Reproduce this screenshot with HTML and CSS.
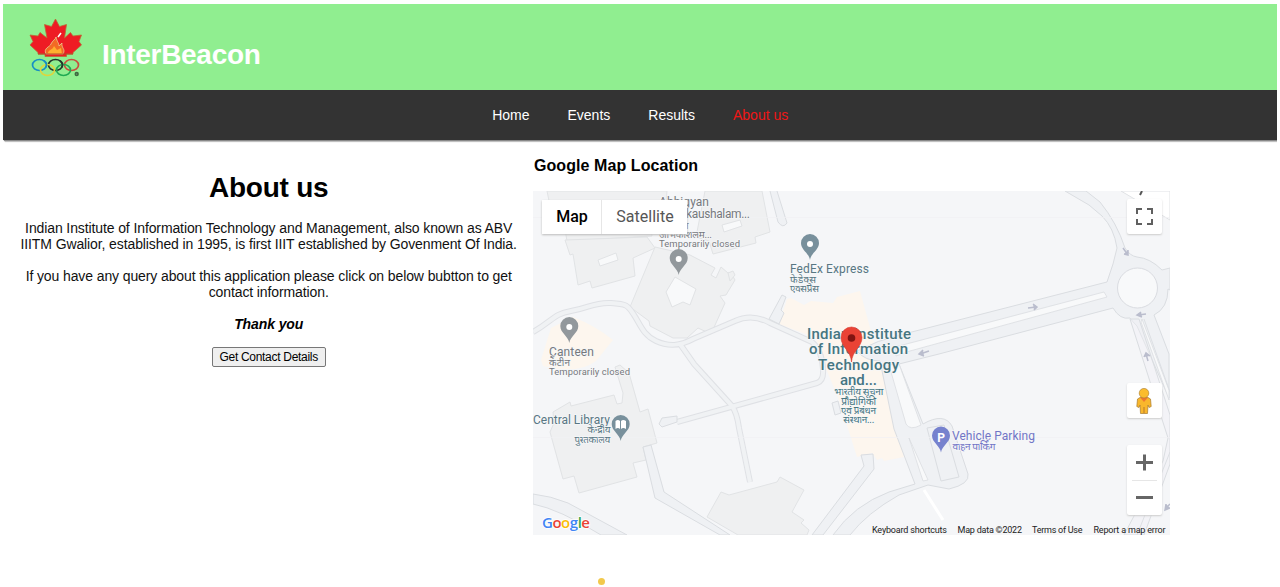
FILE: index.html
```html
<!DOCTYPE html>
<html lang="en">
<head>
<meta charset="utf-8">
<title>InterBeacon - About us</title>
<link rel="stylesheet" href="styles.css">
</head>
<body>
<header class="banner">
  <svg class="logo" width="54" height="60" viewBox="29 18 54 60" aria-hidden="true">
    <path d="M55.500 19 59.500 26.500 66.500 24.500 64.500 38 70.500 32.500 73 36 81.500 35 79 41.500 81.500 45 73 52.500V54H66.500V56.500H45V54H38V52.500L30 45 33 41.500 30 35 38 36 40 32.500 47 38 44.500 24.500 51.500 26.500Z" fill="#ee1c24" stroke="#b96b35" stroke-width=".8"/>
    <path d="M46 54C43 48 50 47 51 44 52 41 56 39 56 37 57 42 59 43 59 46L62 43C61 48 66 49 63 54Z" fill="#f36a24" stroke="#e9cf91" stroke-width=".8"/>
    <path d="M48 54C47 50 53 50 54 46L57 50 61 48 62 54Z" fill="#ffb02e"/>
    <path d="M58 37 61 33" stroke="#fff" stroke-width="1.500"/>
    <path d="M38 54H73" stroke="#b64a24" stroke-width="1"/>
    <g fill="none" stroke-width="1.700">
      <ellipse cx="39.500" cy="65" rx="7" ry="5.500" stroke="#168fc4"/>
      <ellipse cx="55.500" cy="65" rx="7" ry="5.500" stroke="#25352c"/>
      <ellipse cx="71.500" cy="65" rx="7" ry="5.500" stroke="#c94b3d"/>
      <ellipse cx="47.500" cy="70" rx="7" ry="5.500" stroke="#dfd43c"/>
      <ellipse cx="63.500" cy="70" rx="7" ry="5.500" stroke="#20a952"/>
      <path d="M44 60.800A7 5.500 0 0 1 45.500 67.800" stroke="#168fc4"/>
      <path d="M60 60.800A7 5.500 0 0 1 61.500 67.800" stroke="#25352c"/>
    </g>
    <circle cx="76.700" cy="74" r="2.200" fill="#3d6940"/><circle cx="76.700" cy="74" r=".5" fill="#8acb8a"/>
  </svg>
  <h1 class="brand">InterBeacon</h1>
</header>
<nav class="menu">
  <a class="link">Home</a><a class="link">Events</a><a class="link">Results</a><a class="link active">About us</a>
</nav>
<main class="content">
  <section class="about">
    <h2 class="title">About us</h2>
    <p class="intro">Indian Institute of Information Technology and Management, also known as ABV<br>IIITM Gwalior, established in 1995, is first IIIT established by Govenment Of India.</p>
    <p class="query">If you have any query about this application please click on below bubtton to get<br>contact information.</p>
    <p class="thanks">Thank you</p>
    <button class="contact">Get Contact Details</button>
  </section>
  <section class="location">
    <h3 class="map-title">Google Map Location</h3>
    <div class="map">
      <svg class="canvas" width="637" height="344" viewBox="533 191 637 344">
        <rect x="533" y="191" width="637" height="344" fill="#f5f6f8"/>
        <g class="building">
          <path d="M547 191H667L665 214 650 224 652 236 567 241 564 224 553 220Z"/>
          <path d="M705 191H762L770 232 755 237 756 243 713 254 709 241 696 237Z"/>
          <path d="M565 240 570 255 573 254 578 285 590 281 592 288 635 276 633 258 655 248 647 237Z"/>
          <path d="M655 247 690 255 715 268 711 275 716 278 721 267 728 273 731 273 735 280 726 295 720 296 725 303 711 334 698 328 687 338 673 338 650 326 649 321 630 307Z"/>
          <path d="M728 273 733 271 735 275 730 281Z"/>
          <path d="M620 365 615 367 623 393 622 403 617 404 614 395 571 406 570 402 553 412 554 423 550 432 563 479 574 476 579 493 637 477 633 463 646 460 643 447 657 443 648 409 640 412 629 373Z"/>
          <path d="M707 517 721 492 729 495 777 482 780 477 804 490 792 512 804 520 801 523 809 530 807 535H738Z"/>
        </g>
        <path class="hole" d="M598 260 616 253 618 260 600 266ZM675 277 696 289 690 305 683 302 672 307 666 292ZM722 225 740 220 742 226 724 232Z"/>
        <g fill="#fdf6ee">
          <path d="M551 328 573 317Q596 326 613 340L596 361Q577 375 543 366L541 360Z"/>
          <path d="M787 299 791 298 804 305 811 301 833 303 837 297 860 291 872 335 904 457 884 461 882 458 877 460 872 453 857 457 839 400 822 359 816 338 779 324Z"/>
        </g>
        <g class="road-line">
          <path d="M533 332C553 321 553 314 571 311S594 302 611 303 628 306 634 315 643 335 656 341 680 346 693 339L735 321Q752 313 770 323L812 342Q822 350 823 369 824 381 817 383L677 422"/>
          <path d="M680 344 694 364 732 406Q737 413 739 428L750 482"/>
        </g>
        <g class="road-fill">
          <path d="M533 332C553 321 553 314 571 311S594 302 611 303 628 306 634 315 643 335 656 341 680 346 693 339L735 321Q752 313 770 323L812 342Q822 350 823 369 824 381 817 383L677 422"/>
          <path d="M680 344 694 364 732 406Q737 413 739 428L750 482"/>
        </g>
        <path class="road-area" d="M659 424 662 418 677 416V422L662 427ZM769 319 782 295 786 297 781 310 784 313 779 324ZM832 403 838 401 841 413 835 415Z"/>
        <path d="M770 191 778 222Q783 229 787 223L777 191" class="road-area"/>
        <path d="M533 494Q551 496 568 503L627 535H601Q559 509 533 504Z" class="road-area"/>
        <path d="M643 447 651 445 664 492 730 535H720L655 498Z" class="road-area"/>
        <path d="M861 455 873 454 874 469 823 535H812L864 466Z" class="road-area"/>
        <path class="road-area" d="M857 351Q878 340 900 335L1107 282 1113 264 1117 248Q1114 228 1102 216L1089 205 1065 191H1086L1100 202Q1117 223 1125 248 1130 256 1137 257 1150 258 1162 270L1170 268V290L1168 289Q1168 308 1154 315L1169 354V398L1137 326Q1132 321 1130 318 1120 320 1113 308L939 354 899 364 923 424Q944 412 952 426L968 474Q970 484 949 489L928 485 899 495Q867 513 850 535H833Q854 505 889 492L915 484 894 429 880 361Q865 361 857 351Z"/>
        <path class="median" d="M895 347 1104 292 1107 297 910 351 896 356ZM899 364 921 425Q910 431 906 424L889 365ZM909 438 928 480 923 481ZM1142 319 1169 390V400Q1152 352 1141 322Z"/>
        <path class="road-area" d="M927 428 944 425 959 477 941 481Z"/>
        <circle cx="1137.500" cy="288" r="20" fill="#f8f9fa" stroke="#dadce1"/>
        <path class="road-area" d="M1139 319 1170 415V464L1144 535H1124L1163 461 1168 438 1130 319Z" fill-opacity=".4"/>
        <path d="M1144 319 1170 392M1170 452 1137 535" fill="none" stroke="#dcdfe3"/>
        <path d="M924 490 943 520" stroke="#fff" stroke-width="3"/>
        <path d="M1121 191 1170 220V191Z" fill="#fff" stroke="#e0e2e5"/>
        <path d="M1140 195 1142 191" stroke="#555" stroke-width="2"/>
        <path d="M533 217.500H1170M533 437.500H1170" stroke="#f0f1f3" stroke-width=".7"/>
        <g fill="#babdcd" stroke="#babdcd" stroke-width="1.500">
          <path d="M1028 308 1036 307M1033 304 1037 307 1034 310"/><path d="M1123 248 1128 255M1128 250V255L1124 254"/><path d="M1146 314 1138 315M1141 312 1137 315 1142 317"/><path d="M1148 361 1146 354M1144 357 1146 353 1150 356"/><path d="M929 351 920 354M923 350 919 354 924 356"/><path d="M1170 504 1165 509M1166 504 1165 510 1170 508"/>
        </g>
        <g class="labels gray">
          <text x="659" y="206" textLength="50">Abhigyan</text>
          <text x="686" y="218" textLength="64">kaushalam...</text>
          <text class="hi" x="683" y="229">न</text>
          <text class="hi" x="659" y="238" textLength="53">अभिकौशलम...</text>
          <text class="small" x="659" y="247" textLength="81">Temporarily closed</text>
          <text x="549" y="356" textLength="45">Canteen</text>
          <text class="hi" x="549" y="366" textLength="21">कैंटीन</text>
          <text class="small" x="549" y="375" textLength="81">Temporarily closed</text>
        </g>
        <g class="labels teal">
          <text x="790" y="273" textLength="79">FedEx Express</text>
          <text class="hi" x="790" y="283" textLength="26">फेडेक्स</text><text class="hi" x="790" y="292" textLength="29">एक्सप्रेस</text>
          <text x="533" y="424" textLength="77">Central Library</text>
          <text class="hi" x="587" y="433" textLength="23">केन्द्रीय</text><text class="hi" x="574" y="443" textLength="36">पुस्तकालय</text>
        </g>
        <g class="labels place">
          <text x="807" y="338.500" textLength="104">Indian Institute</text><text x="809" y="354" textLength="99">of Information</text><text x="818" y="369.500" textLength="81">Technology</text><text x="840" y="385" textLength="37">and...</text>
          <text class="hi" x="834" y="395" textLength="49">भारतीय सूचना</text><text class="hi" x="841" y="405" textLength="35">प्रौद्योगिकी</text><text class="hi" x="841" y="414" textLength="35">एवं प्रबंधन</text><text class="hi" x="843" y="423" textLength="31">संस्थान...</text>
        </g>
        <g class="labels violet"><text x="952" y="440" textLength="83">Vehicle Parking</text><text class="hi" x="952" y="450" textLength="43">वाहन पार्किंग</text></g>
        <defs><path id="pin" d="M0 0C-1-7-9-10-9-17A9 9 0 0 1 9-17C9-10 1-7 0 0Z"/></defs>
        <g fill="#92989c"><use href="#pin" x="678.700" y="275"/><use href="#pin" x="569.300" y="343"/></g>
        <g fill="#78909c"><use href="#pin" x="810" y="260"/><use href="#pin" x="620.700" y="441"/></g>
        <use href="#pin" x="941" y="452.500" fill="#7682ce"/>
        <g fill="#fff"><circle cx="678.700" cy="259" r="3"/><circle cx="569.300" cy="327" r="3"/><circle cx="810" cy="244" r="3"/><path d="M615.500 421Q618 419 620 421V429Q618 427 615.500 429ZM621 421Q623 419 626 421V429Q623 427 621 429Z"/></g>
        <text x="937.300" y="441.500" class="parking">P</text>
        <path d="M851.500 362C851 351 841 347 841 337.500A10.500 10.500 0 0 1 862 337.500C862 347 852 351 851.500 362Z" fill="#ea4335" stroke="#d53b30" stroke-width=".6"/><circle cx="851.500" cy="338" r="3.800" fill="#811411"/>
        <text x="542" y="528" class="google" textLength="48"><tspan fill="#4285f4">G</tspan><tspan fill="#ea4335">o</tspan><tspan fill="#fbbc05">o</tspan><tspan fill="#4285f4">g</tspan><tspan fill="#34a853">l</tspan><tspan fill="#ea4335">e</tspan></text>
        <g class="credits"><text x="872" y="532.500" textLength="75">Keyboard shortcuts</text><text x="957.500" y="532.500" textLength="64.500">Map data ©2022</text><text x="1032" y="532.500" textLength="50.500">Terms of Use</text><text x="1093.500" y="532.500" textLength="72">Report a map error</text></g>
      </svg>
      <div class="types"><span class="type chosen">Map</span><span class="type">Satellite</span></div>
      <div class="control fullscreen"><svg width="17" height="17"><path d="M1 6V1H6M11 1H16V6M16 11V16H11M6 16H1V11" fill="none" stroke="#606060" stroke-width="2"/></svg></div>
      <div class="control person"><svg width="16" height="26" viewBox="0 0 16 26"><path d="M4 9.500 1.500 11 .8 18.500 3 19.500 4 17 4.500 25.500H11.500L12 17 13 19.500 15.200 18.500 14.500 11 12 9.500Z" fill="#f9b72c" stroke="#a77b31" stroke-width=".7"/><path d="M4 9.500H12L8 14Z" fill="#ef7830"/><circle cx="8" cy="5.200" r="4.800" fill="#fbbc2d" stroke="#a77b31" stroke-width=".6"/><path d="M8 19V25" stroke="#b77a2d"/></svg></div>
      <div class="zoom"><svg width="35" height="70"><path d="M9 17.500H26M17.500 9.500V25.500M9 52.500H26" stroke="#666" stroke-width="3"/><path d="M5 35.500H30" stroke="#e6e6e6"/></svg></div>
    </div>
  </section>
</main>
<i class="dot"></i>
</body>
</html>
```
FILE: styles.css
```css
* { box-sizing: border-box; }
body { margin: 4px 3px 0 3.4px; background: #fff; color: #000; font-family: "Liberation Sans", Arial, sans-serif; height: 583px; overflow: hidden; }
.banner { display: flex; height: 86px; padding: 14px 0 0 25.6px; background: #90ee90; }
.logo { flex: none; }
.brand { margin: 21px 0 0 19px; color: #fff; font-size: 28px; line-height: 32px; letter-spacing: -.3px; }
.menu { display: flex; justify-content: center; gap: 38px; height: 50px; background: #333; box-shadow: 1px 1px 1px #888, 2px 2px 1px #ccc; line-height: 50px; font-size: 14px; color: #fff; }
.active { color: #f01616; }
.content { display: flex; }
.about { width: 529.6px; padding-left: 1px; text-align: center; font-size: 14px; line-height: 16px; letter-spacing: -.11px; color: #111; }
.title { margin: 32px 0 16px; font-size: 28px; line-height: 32px; letter-spacing: -.25px; color: #000; }
.about p { margin: 0 0 16px; white-space: nowrap; }
.about .thanks { margin-bottom: 15px; color: #000; font-weight: bold; font-style: italic; }
.contact { display: block; width: 114px; height: 20px; margin: 0 auto; padding: 0; border: 1px solid #777; border-radius: 2px; background: #efefef; font: 12px "Liberation Sans", Arial, sans-serif; letter-spacing: -.3px; letter-spacing: -.3px; }
.map-title { margin: 16px 0 15px 1px; font-size: 16px; line-height: 20px; letter-spacing: .08px; }
.map { position: relative; width: 637px; height: 344px; }
.canvas { display: block; }
.building { fill: #eff0f1; stroke: #e1e3e5; stroke-width: 1; }
.hole { fill: #f8f9fa; stroke: #e1e3e5; }
.road-line { fill: none; stroke: #dfe1e5; stroke-width: 6; }
.road-fill { fill: none; stroke: #f0f2f4; stroke-width: 4; }
.road-area { fill: #eff1f4; stroke: #dadde1; }
.median { fill: #f8f9fa; stroke: #dadde1; stroke-width: .8; }
.labels { font-family: Roboto, sans-serif; font-size: 12px; paint-order: stroke; stroke: #f5f6f8; stroke-width: 1.5px; }
.labels .hi { font-family: Roboto, "Noto Sans", "Noto Sans Devanagari", sans-serif; font-size: 10px; font-weight: 400; }
.labels .small { font-size: 9.5px; }
.gray { fill: #75797d; }
.teal { fill: #587783; }
.place { fill: #467580; font-size: 15px; font-weight: 500; }
.violet { fill: #7175c6; }
.parking { fill: #fff; font: bold 12px Roboto, sans-serif; }
.google { font: 600 15px "Open Sans", sans-serif; stroke: #fff; stroke-width: 1.5px; paint-order: stroke; }
.credits { fill: #222; font: 9px Roboto, sans-serif; }
.types { position: absolute; left: 9.5px; top: 9px; display: flex; height: 34px; background: #fff; box-shadow: 0 1px 2px #bbb; font: 16px/34px Roboto, sans-serif; color: #565656; }
.type { width: 85px; text-align: center; }
.chosen { width: 60px; border-right: 1px solid #e6e6e6; color: #000; font-weight: 500; }
.control { position: absolute; display: grid; place-items: center; left: 594px; width: 35px; height: 35px; border-radius: 2px; background: #fff; box-shadow: 0 1px 2px #ccc; }
.fullscreen { top: 8px; }
.person { top: 192px; }
.zoom { position: absolute; left: 594px; top: 254px; width: 35px; height: 70px; background: #fff; border-radius: 2px; box-shadow: 0 1px 2px #ccc; }
.dot { position: absolute; left: 598px; top: 578px; width: 7px; height: 7px; border-radius: 50%; background: #f2c94c; }
```
